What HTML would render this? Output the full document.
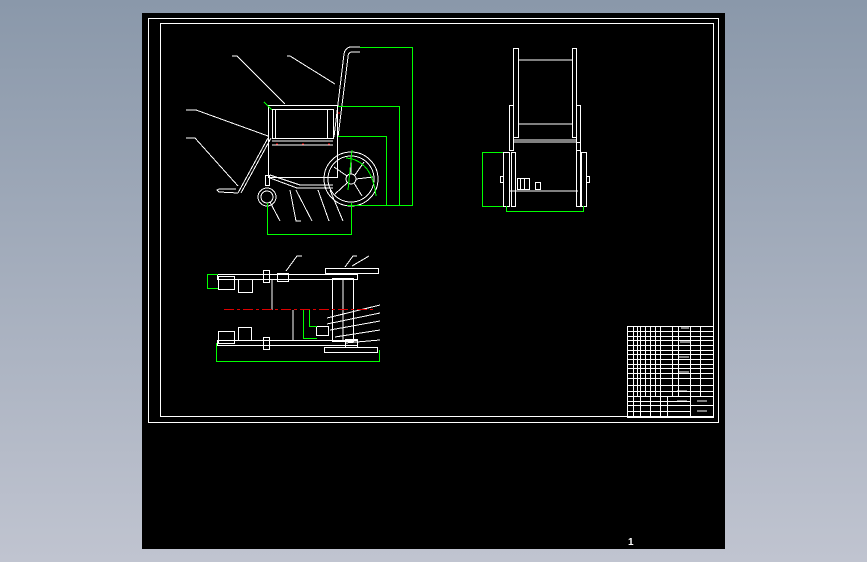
<!DOCTYPE html>
<html><head><meta charset="utf-8"><style>
html,body{margin:0;padding:0;width:867px;height:562px;overflow:hidden;background:linear-gradient(#8a98aa,#c0c4d0);}
svg{position:absolute;left:0;top:0}
</style></head><body>
<svg width="867" height="562" viewBox="0 0 867 562" xmlns="http://www.w3.org/2000/svg" fill="none" stroke-width="1" shape-rendering="crispEdges">
<rect x="142" y="13" width="583" height="536" fill="#000"/>
<rect x="148.5" y="18.5" width="570" height="404" stroke="#fff"/>
<rect x="160.5" y="23.5" width="553" height="393" stroke="#fff"/>
<g stroke="#fff">
<path d="M360 47 L350 47 Q345 48 344 54 L334 137 M360 52 L351 52 Q348 53 348 57 L338 137"/>
<rect x="268.5" y="105.5" width="69" height="72"/>
<rect x="272.5" y="109.5" width="61" height="29"/>
<rect x="275.5" y="109.5" width="52" height="29"/>
<line x1="272" y1="141" x2="333" y2="141"/><line x1="272" y1="145" x2="333" y2="145"/>
<circle cx="351" cy="179" r="27"/><circle cx="351" cy="179" r="23"/><circle cx="351" cy="179" r="5"/>
<path d="M351 174 L351 157 M356 179 L373 177 M347 183 L335 194 M354 183 L362 196 M347 176 L334 167 M355 175 L364 162"/>
<circle cx="267" cy="197" r="9"/><circle cx="267" cy="197" r="6"/>
<path d="M268 138 L238 193 M271 138 L241 193 M238 193 L219 192 L217 190 L219 189 L236 189"/>
<path d="M270 175 L300 185 L333 185 M270 178 L297 188 L333 188"/>
<rect x="265.5" y="175.5" width="4" height="10"/>
<path d="M232 56 L237 56 L285 104 M287 56 L290 56 L335 84 M186 110 L196 110 L268 136 M186 138 L195 138 L238 186 M270 202 L280 221 M290 190 L296 221 L301 221 M296 190 L312 221 M318 190 L329 221 M330 190 L343 221"/>
</g>
<g stroke="#f00"><path d="M276 144h2M302 144h2M328 144h2M338 113h2"/></g>
<g stroke="#0f0">
<path d="M360 47.5 H412.5 V205.5 H347 M338 106.5 H399.5 V205.5 M338 136.5 H386.5 V205.5 M267.5 203 V234.5 H351.5 V203 M264 102 L272 110 M352 150 L348 190"/>
<path d="M346 158 Q372 160 376 196" />
</g>
<g stroke="#fff">
<rect x="513.5" y="48.5" width="5" height="89"/><rect x="572.5" y="48.5" width="4" height="89"/>
<line x1="518" y1="60" x2="572" y2="60"/><line x1="518" y1="124" x2="572" y2="124"/>
<line x1="514" y1="140" x2="577" y2="140"/><line x1="514" y1="142" x2="577" y2="142"/>
<rect x="509.5" y="105.5" width="4" height="45"/><rect x="576.5" y="105.5" width="4" height="45"/>
<rect x="503.5" y="152.5" width="6" height="54"/><rect x="581.5" y="152.5" width="5" height="54"/>
<rect x="511.5" y="152.5" width="4" height="54"/><rect x="576.5" y="142.5" width="4" height="64"/>
<line x1="510" y1="191" x2="578" y2="191"/>
<rect x="517.5" y="178.5" width="7" height="11"/><rect x="520.5" y="178.5" width="9" height="11"/><rect x="535.5" y="182.5" width="5" height="7"/>
<rect x="500.5" y="176.5" width="3" height="6"/><rect x="586.5" y="176.5" width="3" height="6"/>
</g>
<g stroke="#0f0"><path d="M503 152.5 H482.5 V206.5 H503 M506.5 206 V211.5 H583.5 V206"/></g>
<g stroke="#fff">
<rect x="217.5" y="274.5" width="140" height="5"/>
<rect x="325.5" y="268.5" width="53" height="5"/>
<rect x="217.5" y="340.5" width="140" height="5"/>
<rect x="324.5" y="347.5" width="53" height="5"/>
<rect x="218.5" y="276.5" width="16" height="13"/><rect x="238.5" y="279.5" width="14" height="13"/>
<rect x="218.5" y="331.5" width="16" height="12"/><rect x="238.5" y="327.5" width="13" height="13"/>
<rect x="332.5" y="278.5" width="21" height="63"/><line x1="343" y1="279" x2="343" y2="341"/>
<line x1="272" y1="279" x2="272" y2="310"/><line x1="293" y1="310" x2="293" y2="340"/>
<rect x="277.5" y="273.5" width="11" height="8"/><rect x="263.5" y="270.5" width="6" height="12"/><rect x="263.5" y="337.5" width="6" height="12"/>
<rect x="316.5" y="326.5" width="12" height="9"/><rect x="345.5" y="339.5" width="12" height="8"/>
<path d="M286 271 L297 256 L302 256 M345 267 L353 256 L357 256 M352 266 L369 256 M327 318 L380 305 M327 324 L380 313 M330 330 L380 321 M335 337 L380 330 M345 343 L380 340"/>
</g>
<line x1="224" y1="309.5" x2="376" y2="309.5" stroke="#d00" stroke-dasharray="10 3 3 3"/>
<g stroke="#0f0"><path d="M216.5 343 V361.5 H379.5 V350 M218 274.5 H207.5 V288.5 H218 M303.5 310 V338.5 H317 M309.5 310 V326.5 H317"/></g>
<g stroke="#fff">
<rect x="627.5" y="326.5" width="86" height="91"/>
<path d="M627 331.5H713M627 336.5H713M627 340.5H713M627 345.5H713M627 350.5H713M627 354.5H713M627 359.5H713M627 364.5H713M627 368.5H713M627 373.5H713M627 378.5H713M627 385.5H713M627 391.5H713M627 396.5H713M627 401.5H690M627 405.5H713M627 411.5H690"/>
<path d="M633.5 326V417M637.5 326V396M640.5 326V396M645.5 326V396M650.5 326V417M655.5 326V396M660.5 326V417M672.5 326V396M678.5 326V396M690.5 326V417M700.5 326V396M667.5 396V417M640.5 396V417"/>
<path d="M681 328h8M680 342h10M679 357h10M679 372h10M677 401h10M697 401h10M697 411h10M677 391h10"/>
</g>
<text x="628" y="545" fill="#fff" font-family="Liberation Sans, sans-serif" font-size="10" font-weight="bold">1</text>
</svg>
</body></html>
